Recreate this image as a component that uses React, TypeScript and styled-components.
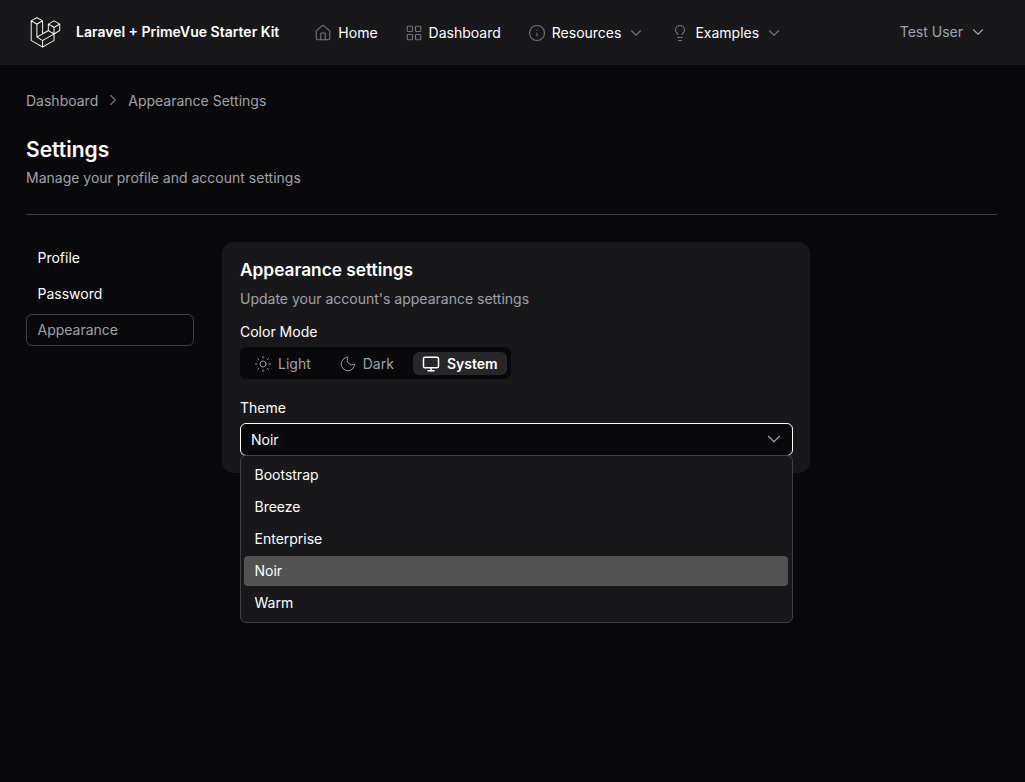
import React from 'react';
import styled, { createGlobalStyle } from 'styled-components';
import { ChevronDown, ChevronRight, House, Info, LayoutGrid, Lightbulb, Monitor, Moon, Sun } from 'lucide-react';

const GlobalStyle = createGlobalStyle`
    html, body {
        margin: 0;
        padding: 0;
        background: #09090b;
    }
    body {
        font-family: Inter, "Liberation Sans", sans-serif;
        font-size: 14px;
        color: #ffffff;
    }
    * {
        box-sizing: border-box;
    }
`;

const Page = styled.div`
    min-height: 782px;
    background: #09090b;
`;

const NavBar = styled.header`
    height: 65px;
    display: flex;
    align-items: center;
    padding: 0 38px 0 30px;
    background: #18181b;
`;

const Brand = styled.div`
    display: flex;
    align-items: center;
    gap: 15px;
    margin-right: 37px;
    font-weight: 600;
    line-height: 20px;
    margin-top: -1px;
`;

const LogoMark = styled.svg`
    width: 31px;
    height: 31px;
    flex: none;
`;

const Menu = styled.nav`
    display: flex;
    align-items: center;
    flex: 1;
`;

const MenuItem = styled.a`
    display: flex;
    align-items: center;
    gap: 8px;
    margin-right: 29px;
    font-weight: 400;
    line-height: 20px;
    color: #ffffff;

    svg {
        flex: none;
        margin: -2px;
        color: #71717a;
    }
`;

const MenuCaret = styled(ChevronDown)`
    && {
        margin: -4px -1px -4px -2px;
    }
`;

const UserMenu = styled.div`
    display: flex;
    align-items: center;
    gap: 6px;
    margin-top: -2px;
    font-weight: 400;
    color: #a1a1aa;
`;

const Main = styled.main`
    padding: 25px 28px 0 26px;
`;

const Crumbs = styled.div`
    display: flex;
    align-items: center;
    gap: 8px;
    height: 20px;
    color: #a1a1aa;
    svg {
        margin: 0 -2px;
        color: #71717a;
    }
`;

const Heading = styled.div`
    margin-top: 26px;
    padding-bottom: 26px;
    border-bottom: 1px solid #3f3f46;
`;

const Title = styled.h1`
    margin: 0;
    font-size: 21px;
    line-height: 28px;
    font-weight: 600;
`;

const Subtitle = styled.p`
    margin: 4px 0 0;
    line-height: 20px;
    color: #a1a1aa;
`;

const Content = styled.div`
    display: flex;
    gap: 28px;
    margin-top: 27px;
`;

const SideNav = styled.aside`
    width: 168px;
    display: flex;
    flex-direction: column;
    gap: 4px;
`;

const SideLink = styled.a<{ $active?: boolean }>`
    height: 32px;
    display: flex;
    align-items: center;
    padding: 0 10.5px 1px;
    border-radius: 6px;
    font-weight: 400;
    color: ${p => (p.$active ? '#a1a1aa' : '#ffffff')};
    border: 1px solid ${p => (p.$active ? '#3f3f46' : 'transparent')};
`;

const Card = styled.section`
    width: 588px;
    height: 231px;
    padding: 18px 17px 18px 18px;
    border-radius: 12px;
    background: #18181b;
`;

const CardTitle = styled.h2`
    margin: 0;
    font-size: 17.3px;
    line-height: 20px;
    font-weight: 600;
`;

const CardSub = styled.p`
    margin: 9px 0 0;
    line-height: 20px;
    color: #a1a1aa;
`;

const FieldLabel = styled.div`
    margin-top: 13px;
    font-weight: 400;
    line-height: 20px;
`;

const ModeSwitch = styled.div`
    display: inline-flex;
    gap: 8px;
    margin-top: 5px;
    padding: 5px 4px 4px;
    border-radius: 6px;
    background: #09090b;
`;

const ModeButton = styled.button<{ $active?: boolean }>`
    height: 23px;
    display: flex;
    align-items: center;
    gap: 8px;
    padding: 0 ${p => (p.$active ? 9 : 11)}px 0 11px;
    border: 0;
    border-radius: 6px;
    font: inherit;
    font-weight: ${p => (p.$active ? 600 : 400)};
    color: ${p => (p.$active ? '#ffffff' : '#a1a1aa')};
    background: ${p => (p.$active ? '#27272a' : 'transparent')};

    svg {
        margin: -1.5px;
    }
`;

const MoonIcon = styled(Moon)`
    && {
        margin: -2px;
    }
`;

const ThemeLabel = styled(FieldLabel)`
    margin-top: 19px;
`;

const SelectWrap = styled.div`
    position: relative;
    margin-top: 5px;
`;

const SelectBox = styled.div`
    height: 33px;
    display: flex;
    align-items: center;
    justify-content: space-between;
    padding: 0 7px 1px 10px;
    border: 1px solid #ffffff;
    border-radius: 6px;
    background: #09090b;
    font-weight: 400;
    svg {
        width: 22px;
        height: 22px;
        color: #a1a1aa;
    }
`;

const Dropdown = styled.ul`
    position: absolute;
    top: 32px;
    left: 0;
    right: 0;
    margin: 0;
    padding: 4px 4px 4px 3px;
    list-style: none;
    border: 1px solid #3f3f46;
    border-radius: 6px;
    background: #18181b;
    display: flex;
    flex-direction: column;
    gap: 2px;
`;

const Option = styled.li<{ $selected?: boolean }>`
    height: 30px;
    display: flex;
    align-items: center;
    padding: 0 10.5px 1px;
    border-radius: 4px;
    font-weight: 400;
    background: ${p => (p.$selected ? '#525252' : 'transparent')};
`;

const themes = ['Bootstrap', 'Breeze', 'Enterprise', 'Noir', 'Warm'];

const LaravelLogo = () => (
    <LogoMark viewBox="0 0 62 65" fill="#ffffff">
        <path d="M61.8548 14.6253C61.8778 14.7102 61.8895 14.7978 61.8897 14.8858V28.5615C61.8898 28.737 61.8434 28.9095 61.7554 29.0614C61.6675 29.2132 61.5409 29.3392 61.3887 29.4265L49.9104 36.0351V49.1337C49.9104 49.4902 49.7209 49.8192 49.4118 49.9987L25.4519 63.7916C25.3971 63.8227 25.3372 63.8427 25.2774 63.8639C25.255 63.8714 25.2338 63.8851 25.2101 63.8913C25.0426 63.9354 24.8666 63.9354 24.6991 63.8913C24.6716 63.8838 24.6467 63.8689 24.6205 63.8589C24.5657 63.8389 24.5084 63.8215 24.456 63.7916L0.501061 49.9987C0.348882 49.9113 0.222437 49.7853 0.134469 49.6334C0.0465019 49.4816 0.000120578 49.3092 0 49.1337L0 8.10652C0 8.01678 0.0124642 7.92953 0.0348998 7.84477C0.0423783 7.8161 0.0598282 7.78993 0.0697995 7.76126C0.0884958 7.70891 0.105946 7.65531 0.133367 7.6067C0.152063 7.5743 0.179485 7.54812 0.20192 7.51821C0.230588 7.47832 0.256763 7.43719 0.290416 7.40229C0.319084 7.37362 0.356476 7.35243 0.388883 7.32751C0.425029 7.29759 0.457436 7.26518 0.498568 7.2415L12.4779 0.345059C12.6296 0.257786 12.8015 0.211853 12.9765 0.211853C13.1515 0.211853 13.3234 0.257786 13.475 0.345059L25.4531 7.2415H25.4556C25.4955 7.26643 25.5292 7.29759 25.5653 7.32626C25.5977 7.35119 25.6339 7.37362 25.6625 7.40104C25.6974 7.43719 25.7224 7.47832 25.7523 7.51821C25.7735 7.54812 25.8021 7.5743 25.8196 7.6067C25.8483 7.65656 25.8645 7.70891 25.8844 7.76126C25.8944 7.78993 25.9118 7.8161 25.9193 7.84602C25.9423 7.93096 25.954 8.01853 25.9542 8.10652V33.7317L35.9355 27.9844V14.8846C35.9355 14.7973 35.948 14.7088 35.9704 14.6253C35.9792 14.5954 35.9954 14.5692 36.0053 14.5405C36.0253 14.4882 36.0427 14.4346 36.0702 14.386C36.0888 14.3536 36.1163 14.3274 36.1375 14.2975C36.1674 14.2576 36.1923 14.2165 36.2272 14.1816C36.2559 14.1529 36.292 14.1317 36.3244 14.1068C36.3618 14.0769 36.3942 14.0445 36.4341 14.0208L48.4147 7.12434C48.5663 7.03694 48.7383 6.99094 48.9133 6.99094C49.0883 6.99094 49.2602 7.03694 49.4118 7.12434L61.3899 14.0208C61.4323 14.0457 61.4647 14.0769 61.5021 14.1055C61.5333 14.1305 61.5694 14.1529 61.5981 14.1803C61.633 14.2165 61.6579 14.2576 61.6878 14.2975C61.7103 14.3274 61.7377 14.3536 61.7551 14.386C61.7838 14.4346 61.8 14.4882 61.8199 14.5405C61.8312 14.5692 61.8474 14.5954 61.8548 14.6253ZM59.893 27.9844V16.6121L55.7013 19.0252L49.9104 22.3593V33.7317L59.8942 27.9844H59.893ZM47.9149 48.5566V37.1768L42.2187 40.4299L25.953 49.7133V61.2003L47.9149 48.5566ZM1.99677 9.83281V48.5566L23.9562 61.199V49.7145L12.4841 43.2219L12.4804 43.2194L12.4754 43.2169C12.4368 43.1945 12.4044 43.1621 12.3682 43.1347C12.3371 43.1097 12.3009 43.0898 12.2735 43.0624L12.271 43.0586C12.2386 43.0275 12.2162 42.9888 12.1887 42.9539C12.1638 42.9203 12.1339 42.8916 12.114 42.8567L12.1127 42.853C12.0903 42.8156 12.0766 42.7707 12.0604 42.7283C12.0442 42.6909 12.023 42.656 12.013 42.6161C12.0005 42.5688 11.998 42.5177 11.9931 42.4691C11.9881 42.4317 11.9781 42.3943 11.9781 42.3569V15.5801L6.18848 12.2446L1.99677 9.83281ZM12.9777 2.36177L2.99764 8.10652L12.9752 13.8513L22.9541 8.10527L12.9752 2.36177H12.9777ZM18.1678 38.2138L23.9574 34.8809V9.83281L19.7657 12.2459L13.9749 15.5801V40.6281L18.1678 38.2138ZM48.9133 9.14105L38.9344 14.8858L48.9133 20.6305L58.8909 14.8846L48.9133 9.14105ZM47.9149 22.3593L42.124 19.0252L37.9323 16.6121V27.9844L43.7219 31.3174L47.9149 33.7317V22.3593ZM24.9533 47.987L39.59 39.631L46.9065 35.4555L36.9352 29.7145L25.4544 36.3242L14.9907 42.3482L24.9533 47.987Z" />
    </LogoMark>
);

export default function App() {
    return (
        <Page>
            <GlobalStyle />
            <NavBar>
                <Brand>
                    <LaravelLogo />
                    <span>Laravel + PrimeVue Starter Kit</span>
                </Brand>
                <Menu>
                    <MenuItem>
                        <House size={18} strokeWidth={1.5} />
                        Home
                    </MenuItem>
                    <MenuItem>
                        <LayoutGrid size={18} strokeWidth={1.5} />
                        Dashboard
                    </MenuItem>
                    <MenuItem>
                        <Info size={18} strokeWidth={1.5} />
                        Resources
                        <MenuCaret size={18} strokeWidth={1.5} />
                    </MenuItem>
                    <MenuItem>
                        <Lightbulb size={18} strokeWidth={1.5} />
                        Examples
                        <MenuCaret size={18} strokeWidth={1.5} />
                    </MenuItem>
                </Menu>
                <UserMenu>
                    Test User
                    <ChevronDown size={18} strokeWidth={1.5} />
                </UserMenu>
            </NavBar>
            <Main>
                <Crumbs>
                    Dashboard
                    <ChevronRight size={18} strokeWidth={1.5} />
                    Appearance Settings
                </Crumbs>
                <Heading>
                    <Title>Settings</Title>
                    <Subtitle>Manage your profile and account settings</Subtitle>
                </Heading>
                <Content>
                    <SideNav>
                        <SideLink>Profile</SideLink>
                        <SideLink>Password</SideLink>
                        <SideLink $active>Appearance</SideLink>
                    </SideNav>
                    <Card>
                        <CardTitle>Appearance settings</CardTitle>
                        <CardSub>Update your account's appearance settings</CardSub>
                        <FieldLabel>Color Mode</FieldLabel>
                        <ModeSwitch>
                            <ModeButton>
                                <Sun size={18} strokeWidth={1.25} />
                                Light
                            </ModeButton>
                            <ModeButton>
                                <MoonIcon size={18} strokeWidth={1.25} />
                                Dark
                            </ModeButton>
                            <ModeButton $active>
                                <Monitor size={18} strokeWidth={2} />
                                System
                            </ModeButton>
                        </ModeSwitch>
                        <ThemeLabel>Theme</ThemeLabel>
                        <SelectWrap>
                            <SelectBox>
                                Noir
                                <ChevronDown strokeWidth={1.25} />
                            </SelectBox>
                            <Dropdown>
                                {themes.map(t => (
                                    <Option key={t} $selected={t === 'Noir'}>
                                        {t}
                                    </Option>
                                ))}
                            </Dropdown>
                        </SelectWrap>
                    </Card>
                </Content>
            </Main>
        </Page>
    );
}
